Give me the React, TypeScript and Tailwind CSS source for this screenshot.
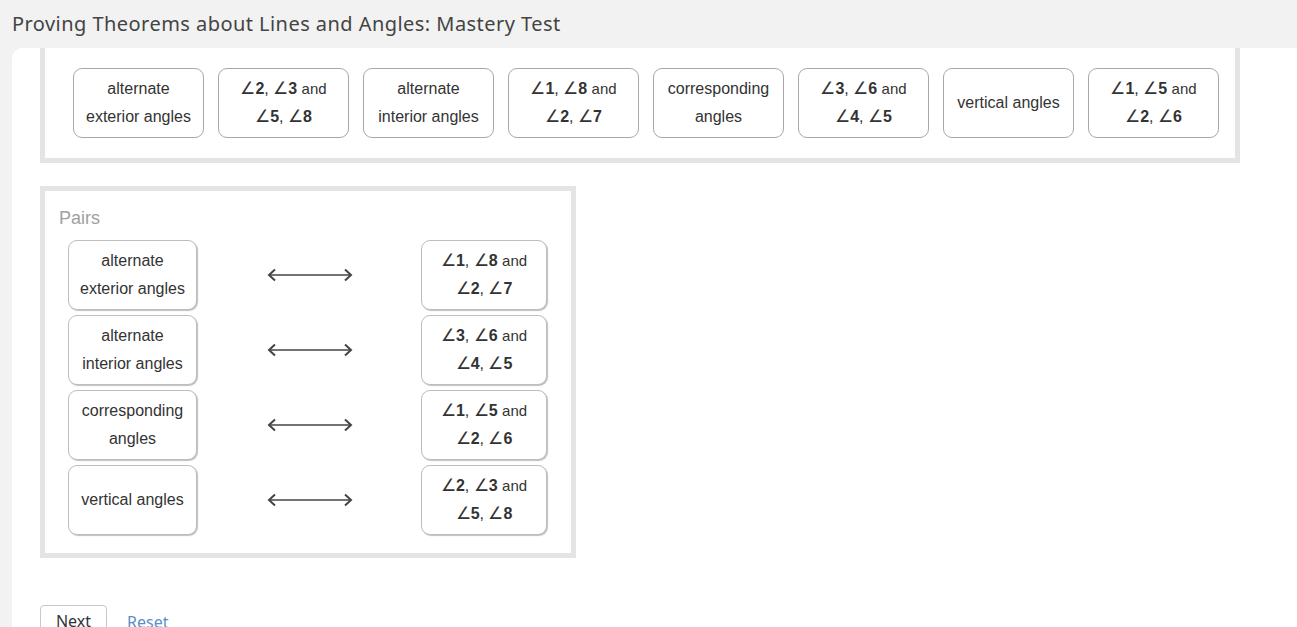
import React from "react";

const A = (n: string) => (
  <>
    <span className="font-normal text-[17px]">∠</span>
    <span className="font-bold">{n}</span>
  </>
);

function AngleText({ a, b, c, d }: { a: string; b: string; c: string; d: string }) {
  return (
    <div className="leading-[28px]">
      <div>
        {A(a)}, {A(b)} <span className="text-[15px]">and</span>
      </div>
      <div>
        {A(c)}, {A(d)}
      </div>
    </div>
  );
}

function Tile({ children, className = "" }: { children: React.ReactNode; className?: string }) {
  return (
    <div
      className={
        "flex items-center justify-center text-center rounded-[9px] border border-[#a8a8a8] bg-white text-[16px] leading-[28px] text-[#333] " +
        className
      }
    >
      {children}
    </div>
  );
}

function Arrow() {
  return (
    <svg width="86" height="14" viewBox="0 0 86 14" className="text-[#444]">
      <line x1="2" y1="7" x2="84" y2="7" stroke="currentColor" strokeWidth="1.6" />
      <polyline points="8,1.5 2,7 8,12.5" fill="none" stroke="currentColor" strokeWidth="2" />
      <polyline points="78,1.5 84,7 78,12.5" fill="none" stroke="currentColor" strokeWidth="2" />
    </svg>
  );
}

export default function App() {
  const font = { fontFamily: '"Liberation Sans", Arial, sans-serif' };
  return (
    <div className="w-[1297px] h-[627px] overflow-hidden bg-[#f2f2f2] flex flex-col" style={font}>
      <div className="h-[48px] shrink-0 pl-[12px] pt-[9px] text-[20px] text-[#444] tracking-[0.45px]" style={{ fontFamily: '"Noto Sans", sans-serif' }}>
        Proving Theorems about Lines and Angles: Mastery Test
      </div>
      <div className="ml-[12px] flex-1 bg-white rounded-tl-[10px] pl-[28px] flex flex-col">
        {/* top bank */}
        <div className="w-[1200px] h-[115px] shrink-0 border-[5px] border-t-0 border-[#e4e4e4] pt-[20px] pl-[28px] flex gap-[14px]">
          <Tile className="w-[131px] h-[70px]">
            <div>alternate<br />exterior angles</div>
          </Tile>
          <Tile className="w-[131px] h-[70px]">
            <AngleText a="2" b="3" c="5" d="8" />
          </Tile>
          <Tile className="w-[131px] h-[70px]">
            <div>alternate<br />interior angles</div>
          </Tile>
          <Tile className="w-[131px] h-[70px]">
            <AngleText a="1" b="8" c="2" d="7" />
          </Tile>
          <Tile className="w-[131px] h-[70px]">
            <div>corresponding<br />angles</div>
          </Tile>
          <Tile className="w-[131px] h-[70px]">
            <AngleText a="3" b="6" c="4" d="5" />
          </Tile>
          <Tile className="w-[131px] h-[70px]">
            <div>vertical angles</div>
          </Tile>
          <Tile className="w-[131px] h-[70px]">
            <AngleText a="1" b="5" c="2" d="6" />
          </Tile>
        </div>

        {/* pairs */}
        <div className="mt-[23px] w-[536px] h-[372px] shrink-0 border-[5px] border-[#e4e4e4] pl-[23px] pt-[16px] flex flex-col">
          <div className="text-[18px] leading-[22px] text-[#a0a0a0] -ml-[9px]">Pairs</div>
          <div className="mt-[11px] flex flex-col gap-[5px]">
            {[
              { l: <div>alternate<br />exterior angles</div>, r: <AngleText a="1" b="8" c="2" d="7" /> },
              { l: <div>alternate<br />interior angles</div>, r: <AngleText a="3" b="6" c="4" d="5" /> },
              { l: <div>corresponding<br />angles</div>, r: <AngleText a="1" b="5" c="2" d="6" /> },
              { l: <div>vertical angles</div>, r: <AngleText a="2" b="3" c="5" d="8" /> },
            ].map((row, i) => (
              <div key={i} className="flex items-center h-[70px]">
                <Tile className="w-[129px] h-[70px] shadow-[1px_1px_1px_rgba(0,0,0,0.25)] border-[#bdbdbd]">{row.l}</Tile>
                <div className="ml-[70px] w-[86px] flex justify-center">
                  <Arrow />
                </div>
                <Tile className="ml-[68px] w-[126px] h-[70px] shadow-[1px_1px_1px_rgba(0,0,0,0.25)] border-[#bdbdbd]">{row.r}</Tile>
              </div>
            ))}
          </div>
        </div>

        {/* buttons */}
        <div className="mt-[47px] flex items-start gap-[20px]">
          <div className="w-[67px] h-[32px] shrink-0 border border-[#c8c8c8] rounded-[4px] flex items-center justify-center text-[16px] text-[#333] bg-white" style={{ fontFamily: '"Noto Sans", sans-serif' }}>
            Next
          </div>
          <div className="pt-[5px] text-[16px] text-[#5b8fc7]" style={{ fontFamily: '"Noto Sans", sans-serif' }}>Reset</div>
        </div>
      </div>
    </div>
  );
}
